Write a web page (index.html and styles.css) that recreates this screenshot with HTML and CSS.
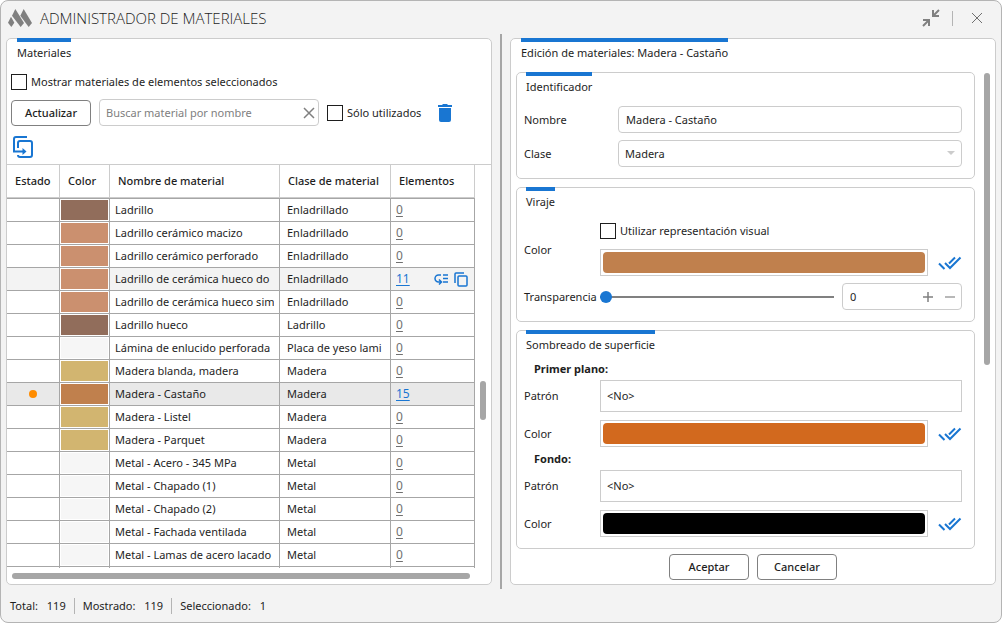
FILE: index.html
```
<!DOCTYPE html>
<html lang="es">
<head>
    <meta charset="UTF-8">
    <meta name="viewport" content="width=device-width, initial-scale=1.0">
    <title>Administrador de materiales</title>
    <link rel="stylesheet" href="styles.css">
</head>
<body>
    <!-- Shared icons -->
    <svg class="icon-defs" aria-hidden="true">
        <symbol id="icon-check" viewBox="0 0 24 14">
            <path d="M1 7.500l5.500 5.500M7 7l5 5L22.500 1.500M11 7.500l6-6" fill="none" stroke="currentColor" stroke-width="2"/>
        </symbol>
    </svg>

    <div class="window">
        <header class="title-bar">
            <svg class="logo" viewBox="0 0 72 54" width="24" height="18" fill="#808080">
                <path d="M0 41L9 23l10 18-9 13z"/>
                <path d="M12 20L22 0l26 42-10 12z"/>
                <path d="M37 20L47 0l25 42-10 12z"/>
            </svg>
            <h1>ADMINISTRADOR DE MATERIALES</h1>
            <button class="icon-button" aria-label="Contraer">
                <svg viewBox="0 0 18 18" width="18" height="18" fill="none" stroke="#808080" stroke-width="2">
                    <path d="M17 1l-5 5M11 1v6h6M1 17l5-5M1 11h6v6"/>
                </svg>
            </button>
            <span class="title-separator"></span>
            <button class="icon-button" aria-label="Cerrar">
                <svg viewBox="0 0 12 12" width="12" height="12" fill="none" stroke="#707070">
                    <path d="M1 1l10 10M11 1L1 11"/>
                </svg>
            </button>
        </header>

        <main class="content">
            <!-- Material list -->
            <section class="panel">
                <h2 class="tab-title">Materiales</h2>

                <label class="check-label filter-selected">
                    <input type="checkbox" class="checkbox"> Mostrar materiales de elementos seleccionados
                </label>

                <div class="toolbar">
                    <button class="button">Actualizar</button>
                    <div class="search">
                        <input type="text" placeholder="Buscar material por nombre" aria-label="Buscar material por nombre">
                        <button class="icon-button" aria-label="Borrar">
                            <svg viewBox="0 0 12 12" width="12" height="12" fill="none" stroke="#808080" stroke-width="1.500">
                                <path d="M1 1l10 10M11 1L1 11"/>
                            </svg>
                        </button>
                    </div>
                    <label class="check-label">
                        <input type="checkbox" class="checkbox"> Sólo utilizados
                    </label>
                    <button class="icon-button trash" aria-label="Eliminar">
                        <svg viewBox="0 0 14 18" width="14" height="18" fill="#1976d2">
                            <path d="M0 1h4l1-1h4l1 1h4v2H0zM1 4h12v12a2 2 0 0 1-2 2H3a2 2 0 0 1-2-2z"/>
                        </svg>
                    </button>
                </div>

                <div class="toolbar-extra">
                    <button class="icon-button" aria-label="Transferir">
                        <svg viewBox="0 0 20 22" width="20" height="22" fill="none" stroke="#1976d2" stroke-width="2">
                            <path d="M14 1H3a2 2 0 0 0-2 2v12.500h9M5 12V7a2 2 0 0 1 2-2h10a2 2 0 0 1 2 2v12a2 2 0 0 1-2 2H7a2 2 0 0 1-2-2"/>
                            <path d="M9.500 12l4 3.500-4 3.500z" fill="#1976d2" stroke="none"/>
                        </svg>
                    </button>
                </div>

                <div class="table-area">
                    <div class="table-scroll">
                        <table class="materials">
                            <colgroup>
                                <col class="col-state">
                                <col class="col-color">
                                <col class="col-name">
                                <col class="col-class">
                                <col class="col-elements">
                            </colgroup>
                            <thead>
                                <tr><th>Estado</th><th>Color</th><th>Nombre de material</th><th>Clase de material</th><th>Elementos</th></tr>
                            </thead>
                            <tbody>
                                <tr><td></td><td class="color"><div class="swatch brown"></div></td><td><div class="cell">Ladrillo</div></td><td><div class="cell">Enladrillado</div></td><td><a href="#" class="count">0</a></td></tr>
                                <tr><td></td><td class="color"><div class="swatch brick"></div></td><td><div class="cell">Ladrillo cerámico macizo</div></td><td><div class="cell">Enladrillado</div></td><td><a href="#" class="count">0</a></td></tr>
                                <tr><td></td><td class="color"><div class="swatch brick"></div></td><td><div class="cell">Ladrillo cerámico perforado</div></td><td><div class="cell">Enladrillado</div></td><td><a href="#" class="count">0</a></td></tr>
                                <tr class="hovered">
                                    <td></td>
                                    <td class="color"><div class="swatch brick"></div></td>
                                    <td><div class="cell">Ladrillo de cerámica hueco do</div></td>
                                    <td><div class="cell">Enladrillado</div></td>
                                    <td>
                                        <div class="elements">
                                            <a href="#" class="count used">11</a>
                                            <span class="row-actions">
                                                <button class="icon-button" aria-label="Reemplazar">
                                                    <svg viewBox="0 0 15 12" width="15" height="12" fill="none" stroke="#1976d2" stroke-width="1.500">
                                                        <path d="M7 2H4.500a3.500 3.500 0 0 0 0 7H7M5 6.500L7.500 9 5 11.500M9 2h5M9 5.500h5M9 9h5"/>
                                                    </svg>
                                                </button>
                                                <button class="icon-button" aria-label="Duplicar">
                                                    <svg viewBox="0 0 14 15" width="14" height="15" fill="none" stroke="#1976d2" stroke-width="1.500">
                                                        <path d="M10 1H2a1 1 0 0 0-1 1v9"/>
                                                        <rect x="4" y="4" width="9" height="10" rx="1"/>
                                                    </svg>
                                                </button>
                                            </span>
                                        </div>
                                    </td>
                                </tr>
                                <tr><td></td><td class="color"><div class="swatch brick"></div></td><td><div class="cell">Ladrillo de cerámica hueco sim</div></td><td><div class="cell">Enladrillado</div></td><td><a href="#" class="count">0</a></td></tr>
                                <tr><td></td><td class="color"><div class="swatch brown"></div></td><td><div class="cell">Ladrillo hueco</div></td><td><div class="cell">Ladrillo</div></td><td><a href="#" class="count">0</a></td></tr>
                                <tr><td></td><td class="color"><div class="swatch light"></div></td><td><div class="cell">Lámina de enlucido perforada</div></td><td><div class="cell">Placa de yeso lami</div></td><td><a href="#" class="count">0</a></td></tr>
                                <tr><td></td><td class="color"><div class="swatch sand"></div></td><td><div class="cell">Madera blanda, madera</div></td><td><div class="cell">Madera</div></td><td><a href="#" class="count">0</a></td></tr>
                                <tr class="selected"><td><div class="dot"></div></td><td class="color"><div class="swatch chestnut"></div></td><td><div class="cell">Madera - Castaño</div></td><td><div class="cell">Madera</div></td><td><a href="#" class="count used">15</a></td></tr>
                                <tr><td></td><td class="color"><div class="swatch sand"></div></td><td><div class="cell">Madera - Listel</div></td><td><div class="cell">Madera</div></td><td><a href="#" class="count">0</a></td></tr>
                                <tr><td></td><td class="color"><div class="swatch sand"></div></td><td><div class="cell">Madera - Parquet</div></td><td><div class="cell">Madera</div></td><td><a href="#" class="count">0</a></td></tr>
                                <tr><td></td><td class="color"><div class="swatch light"></div></td><td><div class="cell">Metal - Acero - 345 MPa</div></td><td><div class="cell">Metal</div></td><td><a href="#" class="count">0</a></td></tr>
                                <tr><td></td><td class="color"><div class="swatch light"></div></td><td><div class="cell">Metal - Chapado (1)</div></td><td><div class="cell">Metal</div></td><td><a href="#" class="count">0</a></td></tr>
                                <tr><td></td><td class="color"><div class="swatch light"></div></td><td><div class="cell">Metal - Chapado (2)</div></td><td><div class="cell">Metal</div></td><td><a href="#" class="count">0</a></td></tr>
                                <tr><td></td><td class="color"><div class="swatch light"></div></td><td><div class="cell">Metal - Fachada ventilada</div></td><td><div class="cell">Metal</div></td><td><a href="#" class="count">0</a></td></tr>
                                <tr><td></td><td class="color"><div class="swatch light"></div></td><td><div class="cell">Metal - Lamas de acero lacado</div></td><td><div class="cell">Metal</div></td><td><a href="#" class="count">0</a></td></tr>
                                <tr><td></td><td class="color"><div class="swatch light"></div></td><td></td><td></td><td></td></tr>
                            </tbody>
                        </table>
                    </div>
                    <div class="table-rail">
                        <div class="thumb"></div>
                    </div>
                </div>
                <div class="bottom-rail"><div class="thumb"></div></div>
            </section>

            <div class="splitter"></div>

            <!-- Material editor -->
            <section class="panel">
                <h2 class="tab-title">Edición de materiales: Madera - Castaño</h2>

                <div class="editor">
                    <div class="cards">
                        <div class="card">
                            <h3 class="tab-title">Identificador</h3>
                            <div class="fields identity">
                                <div class="field">
                                    <label for="name">Nombre</label>
                                    <input type="text" id="name" class="box grow" value="Madera - Castaño">
                                </div>
                                <div class="field">
                                    <label for="class">Clase</label>
                                    <div class="select grow">
                                        <select id="class" class="box">
                                            <option>Madera</option>
                                        </select>
                                        <span class="arrow"></span>
                                    </div>
                                </div>
                            </div>
                        </div>

                        <div class="card">
                            <h3 class="tab-title">Viraje</h3>
                            <div class="fields shading">
                                <div class="field">
                                    <label for="shade-color">Color</label>
                                    <div class="stack grow">
                                        <label class="check-label">
                                            <input type="checkbox" class="checkbox"> Utilizar representación visual
                                        </label>
                                        <div class="color-row">
                                            <button id="shade-color" class="color-box"><span class="chestnut"></span></button>
                                            <button class="icon-button" aria-label="Aplicar a todos"><svg class="check"><use href="#icon-check"/></svg></button>
                                        </div>
                                    </div>
                                </div>
                                <div class="field">
                                    <label for="transparency">Transparencia</label>
                                    <input type="range" id="transparency" class="slider grow" min="0" max="100" value="0">
                                    <div class="spinner">
                                        <input type="text" value="0" aria-label="Valor de transparencia">
                                        <button class="icon-button" aria-label="Aumentar">
                                            <svg viewBox="0 0 10 10" width="10" height="10" stroke="#808080" stroke-width="1.500"><path d="M0 5h10M5 0v10"/></svg>
                                        </button>
                                        <button class="icon-button" aria-label="Disminuir">
                                            <svg viewBox="0 0 10 10" width="10" height="10" stroke="#b8b8b8" stroke-width="2"><path d="M0 5h10"/></svg>
                                        </button>
                                    </div>
                                </div>
                            </div>
                        </div>

                        <div class="card">
                            <h3 class="tab-title">Sombreado de superficie</h3>
                            <h4 class="subtitle first">Primer plano:</h4>
                            <div class="fields pattern">
                                <div class="field">
                                    <label for="front-pattern">Patrón</label>
                                    <button id="front-pattern" class="pattern-box grow">&lt;No&gt;</button>
                                </div>
                                <div class="field">
                                    <label for="front-color">Color</label>
                                    <div class="color-row grow">
                                        <button id="front-color" class="color-box"><span class="orange"></span></button>
                                        <button class="icon-button" aria-label="Aplicar a todos"><svg class="check"><use href="#icon-check"/></svg></button>
                                    </div>
                                </div>
                            </div>
                            <h4 class="subtitle">Fondo:</h4>
                            <div class="fields pattern last">
                                <div class="field">
                                    <label for="back-pattern">Patrón</label>
                                    <button id="back-pattern" class="pattern-box grow">&lt;No&gt;</button>
                                </div>
                                <div class="field">
                                    <label for="back-color">Color</label>
                                    <div class="color-row grow">
                                        <button id="back-color" class="color-box"><span class="black"></span></button>
                                        <button class="icon-button" aria-label="Aplicar a todos"><svg class="check"><use href="#icon-check"/></svg></button>
                                    </div>
                                </div>
                            </div>
                        </div>
                    </div>
                    <div class="thumb"></div>
                </div>

                <div class="actions">
                    <button class="button">Aceptar</button>
                    <button class="button">Cancelar</button>
                </div>
            </section>
        </main>

        <footer class="status-bar">
            <div class="status">Total: <span>119</span></div>
            <div class="status">Mostrado: <span>119</span></div>
            <div class="status">Seleccionado: <span>1</span></div>
        </footer>
    </div>
</body>
</html>
```
FILE: styles.css
```
/* Global */
* {
    box-sizing: border-box;
}

body {
    margin: 0;
    background-color: #fff;
    color: #1e1e1e;
    font-family: "Noto Sans", "Open Sans", sans-serif;
    font-size: 11px;
    line-height: 16px;
}

h1, h2, h3, h4 {
    margin: 0;
    font-size: inherit;
    font-weight: 400;
}

button, input, select {
    font: inherit;
    color: inherit;
    margin: 0;
    outline: none;
}

.icon-defs {
    position: absolute;
    width: 0;
    height: 0;
}

.icon-button {
    display: flex;
    padding: 0;
    border: none;
    background: none;
    cursor: pointer;
}

.grow {
    flex: 1;
    min-width: 0;
}

.thumb {
    background-color: #a6a6a6;
    border-radius: 3px;
}

/* Window */
.window {
    display: flex;
    flex-direction: column;
    height: 100vh;
    border: 1px solid #b4b4b4;
    border-radius: 8px;
    background-color: #f3f3f3;
    overflow: hidden;
}

.title-bar {
    display: flex;
    align-items: center;
    height: 37px;
    padding: 0 18px 3px 7px;
}

.title-bar h1 {
    flex: 1;
    margin-left: 8px;
    font-family: "Open Sans", sans-serif;
    font-size: 15px;
    font-weight: 300;
}

.title-separator {
    width: 1px;
    height: 15px;
    margin: 0 18px 0 12px;
    background-color: #b4b4b4;
}

.content {
    display: flex;
    flex: 1;
    min-height: 0;
    padding: 0 5px;
}

.splitter {
    width: 2px;
    margin: -4px 8px;
    background-color: #a6a6a6;
}

.panel {
    display: flex;
    flex: 1;
    flex-direction: column;
    min-width: 0;
    border: 1px solid #ccc;
    border-radius: 5px;
    background-color: #fff;
}

.tab-title {
    align-self: flex-start;
    width: fit-content;
    margin: -1px 0 0 10px;
    padding-top: 3px;
    border-top: 4px solid #1976d2;
}

/* Controls */
.check-label {
    display: flex;
    align-items: center;
    gap: 4px;
}

.checkbox {
    appearance: none;
    width: 16px;
    height: 16px;
    border: 1px solid #1e1e1e;
    background-color: #fff;
}

.button {
    width: 80px;
    height: 26px;
    padding: 0;
    border: 1px solid #808080;
    border-radius: 4px;
    background-color: #fff;
    font-weight: 500;
    cursor: pointer;
}

.box {
    width: 100%;
    height: 27px;
    padding: 0 7px;
    border: 1px solid #ccc;
    border-radius: 4px;
    background-color: #fff;
}

/* Material list */
.filter-selected {
    margin: 13px 4px 9px;
}

.toolbar {
    display: flex;
    align-items: center;
    padding: 0 4px;
}

.search {
    display: flex;
    align-items: center;
    width: 220px;
    height: 27px;
    margin: 0 8px;
    padding: 0 3px 0 6px;
    border: 1px solid #ccc;
    border-radius: 4px;
}

.search input {
    flex: 1;
    min-width: 0;
    padding: 0;
    border: none;
}

.search input::placeholder {
    color: #808080;
}

.trash {
    margin-left: 17px;
}

.toolbar-extra {
    padding: 10px 6px 6px;
}

.table-area {
    display: flex;
    flex: 1;
    min-height: 0;
    border-top: 1px solid #ccc;
}

.table-scroll {
    flex: 1;
    overflow: hidden;
}

.materials {
    width: 100%;
    table-layout: fixed;
    border-collapse: separate;
    border-spacing: 0;
}

.col-state {
    width: 53px;
}

.col-color {
    width: 50px;
}

.col-name {
    width: 170px;
}

.col-class {
    width: 111px;
}

.materials th {
    height: 33px;
    padding: 0 8px;
    border-right: 1px solid #ccc;
    border-bottom: 1px solid #ccc;
    font-weight: 500;
    text-align: left;
    white-space: nowrap;
}

.materials td {
    height: 23px;
    padding: 0 5px;
    border-top: 1px solid #a6a6a6;
    border-right: 1px solid #a6a6a6;
}

.materials td.color {
    padding: 1px;
    background-color: #fff;
}

.materials td:nth-child(4) {
    padding-left: 7px;
}

.cell {
    overflow: hidden;
    white-space: nowrap;
}

.hovered {
    background-color: #f3f3f3;
}

.selected {
    background-color: #e9e9e9;
}

.swatch {
    height: 20px;
}

.brown {
    background-color: #916d5b;
}

.brick {
    background-color: #cb906f;
}

.light {
    background-color: #f6f6f6;
}

.sand {
    background-color: #d2b570;
}

.chestnut {
    background-color: #c0804d;
}

.orange {
    background-color: #d2691e;
}

.black {
    background-color: #000;
}

.dot {
    width: 8px;
    height: 8px;
    margin: auto;
    border-radius: 50%;
    background-color: #ff8c00;
}

.count {
    color: #707070;
    font-size: 12px;
    text-underline-offset: 2px;
}

.count.used {
    color: #1976d2;
}

.elements,
.row-actions {
    display: flex;
    align-items: center;
}

.elements {
    justify-content: space-between;
}

.row-actions {
    gap: 5px;
    padding-right: 1px;
}

.table-rail {
    display: flex;
    flex-direction: column;
    align-items: center;
    width: 16px;
    padding-top: 216px;
}

.table-rail .thumb {
    width: 6px;
    height: 39px;
}

.bottom-rail {
    padding: 5px 21px 5px 5px;
}

.bottom-rail .thumb {
    height: 6px;
}

/* Material editor */
.editor {
    display: flex;
    flex: 1;
    min-height: 0;
    margin-top: 11px;
    padding: 0 5px;
}

.editor > .thumb {
    width: 6px;
    height: 292px;
    margin: 1px 0 0 9px;
}

.cards {
    display: flex;
    flex: 1;
    flex-direction: column;
    gap: 8px;
}

.card {
    border: 1px solid #ccc;
    border-radius: 5px;
}

.card .tab-title {
    margin-left: 9px;
}

.fields {
    display: flex;
    flex-direction: column;
    gap: 7px;
    padding: 11px 12px 11px 7px;
}

.field {
    display: flex;
    align-items: center;
}

.field > label {
    width: 76px;
}

.identity .field > label {
    width: 94px;
}

.select {
    position: relative;
}

.select select {
    display: block;
    appearance: none;
    padding: 0 6px;
}

.arrow {
    position: absolute;
    top: 11px;
    right: 7px;
    border: 4px solid transparent;
    border-top-color: #ccc;
    border-bottom: none;
}

.shading {
    padding-top: 13px;
}

.stack {
    display: flex;
    flex-direction: column;
    gap: 10px;
}

.color-row {
    display: flex;
    align-items: center;
    gap: 10px;
}

.color-box {
    display: flex;
    flex: 1;
    height: 27px;
    padding: 2px;
    border: 1px solid #ccc;
    background-color: #fff;
}

.color-box span {
    flex: 1;
    align-self: stretch;
    border-radius: 4px;
}

.check {
    width: 24px;
    height: 14px;
    color: #1976d2;
}

.slider {
    appearance: none;
    height: 12px;
    background: linear-gradient(#808080, #808080) center / 100% 2px no-repeat;
}

.slider::-webkit-slider-thumb {
    appearance: none;
    width: 12px;
    height: 12px;
    border-radius: 50%;
    background-color: #1976d2;
}

.spinner {
    display: flex;
    align-items: center;
    gap: 12px;
    width: 120px;
    height: 27px;
    margin-left: 8px;
    padding: 0 6px 0 7px;
    border: 1px solid #ccc;
    border-radius: 4px;
}

.spinner input {
    flex: 1;
    min-width: 0;
    padding: 0;
    border: none;
}

.subtitle {
    margin: 4px 0 3px 17px;
    font-weight: 700;
}

.subtitle.first {
    margin-top: 8px;
}

.pattern {
    gap: 8px;
    padding-top: 0;
    padding-bottom: 0;
}

.pattern.last {
    padding-bottom: 11px;
}

.pattern-box {
    height: 32px;
    padding: 0 6px;
    border: 1px solid #ccc;
    background-color: #fff;
    text-align: left;
}

.actions {
    display: flex;
    justify-content: center;
    gap: 8px;
    padding: 5px 0 4px;
}

/* Status bar */
.status-bar {
    display: flex;
    align-items: center;
    height: 37px;
    padding: 5px 9px 0;
}

.status span {
    margin-left: 6px;
}

.status + .status {
    margin-left: 8px;
    padding-left: 8px;
    border-left: 1px solid #b4b4b4;
}
```
